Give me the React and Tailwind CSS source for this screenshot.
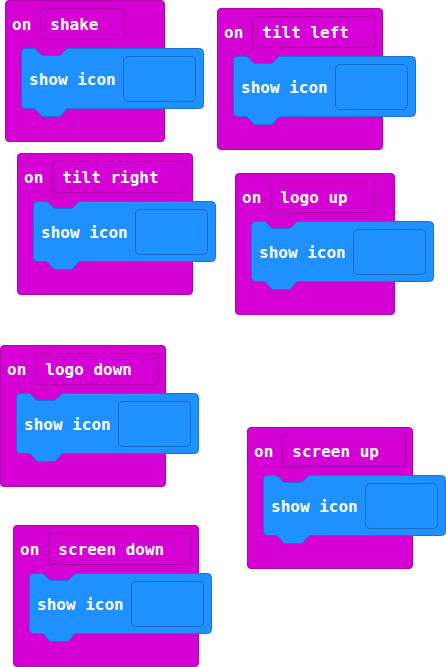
const blocks = [
  { id: 1, label: "shake", pos: "left-[5px] top-[0px]", width: "w-[160px]" },
  { id: 2, label: "tilt left", pos: "left-[217px] top-[8px]", width: "w-[166px]" },
  { id: 3, label: "tilt right", pos: "left-[17px] top-[153px]", width: "w-[176px]" },
  { id: 4, label: "logo up", pos: "left-[235px] top-[173px]", width: "w-[160px]" },
  { id: 5, label: "logo down", pos: "left-[0px] top-[345px]", width: "w-[166px]" },
  { id: 6, label: "screen up", pos: "left-[247px] top-[427px]", width: "w-[166px]" },
  { id: 7, label: "screen down", pos: "left-[13px] top-[525px]", width: "w-[186px]" },
];

function ShowIcon() {
  return (
    <div className="relative ml-[15px] mt-[8px] w-[183px]">
      <svg
        width="183"
        height="70"
        viewBox="0 0 183 70"
        className="absolute left-0 top-0 overflow-visible"
      >
        <path
          d="M0.5 4.5 a4 4 0 0 1 4 -4 H14 l7 7 h18 l7 -7 H178.5 a4 4 0 0 1 4 4 V56.5 a4 4 0 0 1 -4 4 H46 l-7 8 h-18 l-7 -8 H4.5 a4 4 0 0 1 -4 -4 Z"
          fill="#1e90ff"
          stroke="#1a74cf"
          strokeWidth="1"
        />
      </svg>
      <div className="relative flex h-[61px] items-center justify-between pl-[8px] pr-[8px]">
        <span className="pt-[2px]">show icon</span>
        <div className="h-[46px] w-[73px] rounded-[5px] border border-[#1a6cc0] bg-[#1e90ff]" />
      </div>
    </div>
  );
}

function EventBlock({ label, pos, width }) {
  return (
    <div
      className={`absolute ${pos} ${width} h-[142px] rounded-[4px] border border-[#b000b0] bg-[#d400d4] pt-[7px]`}
    >
      <div className="flex items-center gap-[9px] pl-[6px]">
        <span className="pt-[2px]">on</span>
        <div className="flex h-[32px] items-center rounded-[4px] border border-[#a600a6] pl-[9px] pr-[26px] pt-[2px]">
          {label}
        </div>
      </div>
      <ShowIcon />
    </div>
  );
}

export default function App() {
  return (
    <div className="relative h-[667px] w-[446px] overflow-hidden bg-white font-['DejaVu_Sans_Mono',monospace] text-[16px] font-bold leading-none text-white">
      {blocks.map((b) => (
        <EventBlock key={b.id} {...b} />
      ))}
    </div>
  );
}
